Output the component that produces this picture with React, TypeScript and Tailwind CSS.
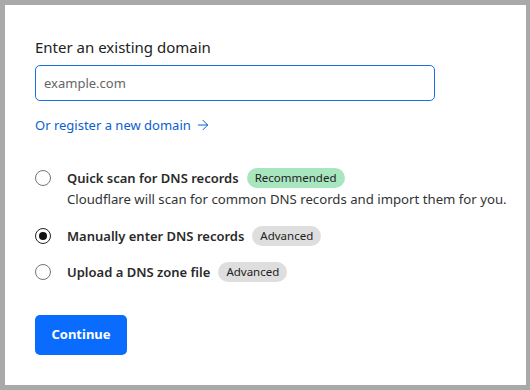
import { ArrowRight } from 'lucide-react';

const OPTIONS = [
  { label: 'Quick scan for DNS records', badge: 'Recommended', tone: 'green', checked: false, gap: 'mt-[33px]',
    note: 'Cloudflare will scan for common DNS records and import them for you.' },
  { label: 'Manually enter DNS records', badge: 'Advanced', tone: 'gray', checked: true, gap: 'mt-[17px]' },
  { label: 'Upload a DNS zone file', badge: 'Advanced', tone: 'gray', checked: false, gap: 'mt-[16px]' },
];

export default function App() {
  return (
    <div className="w-[530px] h-[390px] bg-[#a9a9a9] pt-[5px] pl-[5px] pr-[4px] pb-[5px] font-['Noto_Sans',sans-serif]">
      <div className="h-full bg-white px-[30px] pt-[32px]">
        {/* Domain input */}
        <label className="block text-[15px] leading-5 text-[#222]">Enter an existing domain</label>
        <input
          type="text"
          placeholder="example.com"
          className="mt-[8px] block w-[400px] h-[36px] rounded-[5px] border-[1.5px] border-[#1a6fe3] px-[8px] text-[13px] text-[#333] placeholder:text-[#666] outline-none"
        />
        <a className="mt-[14px] flex items-center gap-[4px] text-[13px] leading-5 text-[#0b5ed2]">
          Or register a new domain <ArrowRight size={16} strokeWidth={1.5} />
        </a>

        {/* Import options */}
        {OPTIONS.map((o) => (
          <div key={o.label} className={`${o.gap} flex gap-[16px]`}>
            <div className="h-[20px] flex items-center">
              <span className={`w-[16px] h-[16px] rounded-full border flex items-center justify-center ${o.checked ? 'border-[#222]' : 'border-[#757575]'}`}>
                {o.checked && <span className="w-[8px] h-[8px] rounded-full bg-[#111]" />}
              </span>
            </div>
            <div>
              <div className="flex items-center gap-[8px] h-[20px]">
                <span className="text-[13px] leading-5 font-semibold text-[#2a2a2a]">{o.label}</span>
                <span className={`rounded-full px-[8px] h-[20px] leading-[20px] text-[11.5px] text-[#222] ${o.tone === 'green' ? 'bg-[#a8e6bf]' : 'bg-[#dedede]'}`}>
                  {o.badge}
                </span>
              </div>
              {o.note && <p className="mt-[1px] whitespace-nowrap text-[13.2px] leading-5 text-[#333]">{o.note}</p>}
            </div>
          </div>
        ))}

        <button className="mt-[33px] w-[92px] h-[40px] rounded-[5px] bg-[#0a6cff] text-white text-[13px] font-bold">
          Continue
        </button>
      </div>
    </div>
  );
}
